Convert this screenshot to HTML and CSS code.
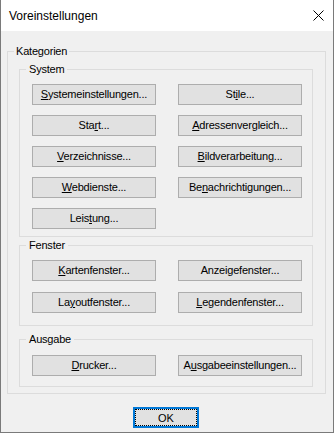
FILE: index.html
```html
<!DOCTYPE html>
<html lang="de">
<head>
<meta charset="utf-8">
<title>Voreinstellungen</title>
<link rel="stylesheet" href="styles.css">
</head>
<body>
<div class="window">
  <div class="titlebar">
    <span class="title">Voreinstellungen</span>
    <svg class="close" width="11" height="11" viewBox="0 0 11 11"><path d="M0.5 0.5 L10.5 10.5 M10.5 0.5 L0.5 10.5" stroke="#000" stroke-width="1" fill="none"/></svg>
  </div>
  <div class="content">
    <fieldset class="group outer">
      <legend>Kategorien</legend>
      <div class="outer-body">
        <fieldset class="group sub system">
          <legend>System</legend>
          <div class="grid">
            <button class="btn"><u>S</u>ystemeinstellungen...</button>
            <button class="btn">St<u>i</u>le...</button>
            <button class="btn">Sta<u>r</u>t...</button>
            <button class="btn"><u>A</u>dressenvergleich...</button>
            <button class="btn"><u>V</u>erzeichnisse...</button>
            <button class="btn"><u>B</u>ildverarbeitung...</button>
            <button class="btn"><u>W</u>ebdienste...</button>
            <button class="btn">Be<u>n</u>achrichtigungen...</button>
            <button class="btn">Leis<u>t</u>ung...</button>
          </div>
        </fieldset>
        <fieldset class="group sub fenster">
          <legend>Fenster</legend>
          <div class="grid">
            <button class="btn"><u>K</u>artenfenster...</button>
            <button class="btn">Anzeigefenster...</button>
            <button class="btn">La<u>y</u>outfenster...</button>
            <button class="btn"><u>L</u>egendenfenster...</button>
          </div>
        </fieldset>
        <fieldset class="group sub ausgabe">
          <legend>Ausgabe</legend>
          <div class="grid">
            <button class="btn"><u>D</u>rucker...</button>
            <button class="btn">A<u>u</u>sgabeeinstellungen...</button>
          </div>
        </fieldset>
      </div>
    </fieldset>
    <div class="footer">
      <button class="ok"><span class="focus">OK</span></button>
    </div>
  </div>
</div>
</body>
</html>
```
FILE: styles.css
```css
html, body {
  margin: 0;
  padding: 0;
  background: #f0f0f0;
}
.window {
  width: 334px;
  height: 433px;
  box-sizing: border-box;
  border: 1px solid #7a7a7a;
  border-top: none;
  background: #f0f0f0;
  display: flex;
  flex-direction: column;
  font-family: "Liberation Sans", Arial, sans-serif;
  color: #000;
}
.titlebar {
  height: 31px;
  background: #fff;
  display: flex;
  align-items: center;
  justify-content: space-between;
  padding: 0 9px 0 8px;
  flex: none;
}
.title {
  font-size: 12px;
  line-height: 14px;
  margin-top: 1px;
}
.close {
  display: block;
  margin-top: 0;
}
.content {
  padding: 14px 7px 0 6px;
  flex: 1;
}
.group {
  margin: 0;
  padding: 0;
  border: 1px solid #dcdcdc;
  min-width: 0;
}
.group legend {
  font-size: 11px;
  line-height: 13px;
  letter-spacing: -0.2px;
  padding: 0 2px;
  margin-left: 6px;
}
.outer legend {
  margin-left: 6px;
}
.sub legend {
  margin-left: 6px;
  padding: 0 3px;
}
.outer-body {
  padding: 5px 12px 6px 11px;
  display: flex;
  flex-direction: column;
}
.grid {
  display: grid;
  grid-template-columns: 124px 124px;
  column-gap: 22px;
  padding-left: 12px;
}
.system .grid {
  row-gap: 10px;
  padding-top: 8px;
  padding-bottom: 7px;
}
.fenster {
  margin-top: 2px;
}
.fenster .grid {
  row-gap: 11px;
  padding-top: 8px;
  padding-bottom: 12px;
}
.ausgabe {
  margin-top: 7px;
}
.ausgabe .grid {
  padding-top: 9px;
  padding-bottom: 10px;
}
.btn {
  height: 21px;
  box-sizing: border-box;
  margin: 0;
  padding: 0;
  border: 1px solid #adadad;
  background: #e1e1e1;
  font-family: "Liberation Sans", Arial, sans-serif;
  font-size: 11px;
  letter-spacing: -0.2px;
  color: #000;
  line-height: 13px;
}
.btn u {
  text-decoration-thickness: 1px;
  text-underline-offset: 1px;
}
.footer {
  display: flex;
  justify-content: center;
  padding-top: 13px;
  padding-right: 1px;
}
.ok {
  width: 66px;
  height: 21px;
  box-sizing: border-box;
  margin: 0;
  padding: 0;
  border: 2px solid #0078d7;
  background: #e1e1e1;
  display: flex;
}
.focus {
  flex: 1;
  border: 1px dotted #000;
  display: flex;
  align-items: center;
  justify-content: center;
  font-family: "Liberation Sans", Arial, sans-serif;
  font-size: 11px;
  color: #000;
}
```
